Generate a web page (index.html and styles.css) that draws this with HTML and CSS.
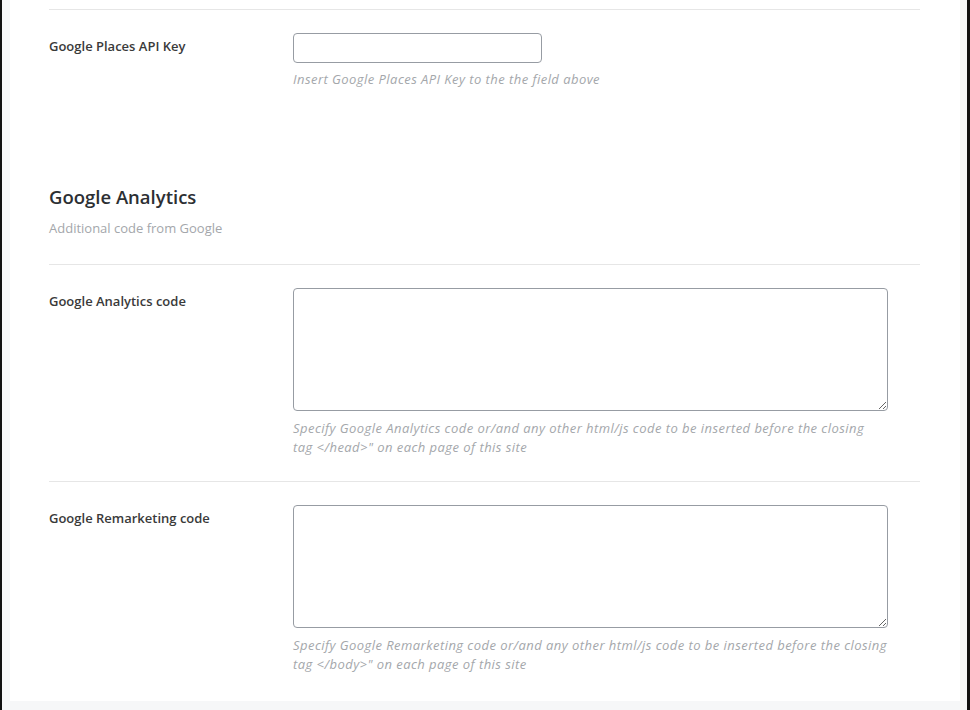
FILE: index.html
```html
<!DOCTYPE html>
<html>
<head>
<meta charset="utf-8">
<link rel="stylesheet" href="styles.css">
</head>
<body>
<div class="frame">
  <div class="panel">
    <hr class="rule first">
    <div class="row">
      <div class="label">Google Places API Key</div>
      <div class="field">
        <input class="text-input" type="text">
        <p class="help">Insert Google Places API Key to the the field above</p>
      </div>
    </div>

    <div class="section">
      <h2 class="section-title">Google Analytics</h2>
      <p class="section-sub">Additional code from Google</p>
    </div>

    <hr class="rule">
    <div class="row">
      <div class="label">Google Analytics code</div>
      <div class="field">
        <textarea class="code-area"></textarea>
        <p class="help">Specify Google Analytics code or/and any other html/js code to be inserted before the closing<br>tag &lt;/head&gt;" on each page of this site</p>
      </div>
    </div>

    <hr class="rule">
    <div class="row">
      <div class="label">Google Remarketing code</div>
      <div class="field">
        <textarea class="code-area"></textarea>
        <p class="help">Specify Google Remarketing code or/and any other html/js code to be inserted before the closing<br>tag &lt;/body&gt;" on each page of this site</p>
      </div>
    </div>
  </div>
</div>
</body>
</html>
```

FILE: styles.css
```css
html, body {
  margin: 0;
  padding: 0;
  background: #f6f7f7;
}

body {
  font-family: "Open Sans", "Liberation Sans", sans-serif;
}

.frame {
  box-sizing: border-box;
  width: 970px;
  height: 710px;
  display: flex;
  border-left: 2px solid #111;
  border-right: 3px solid #111;
  background: #f6f7f8;
  padding: 0 7px 9px 8px;
}

.panel {
  flex: 1;
  background: #fff;
  padding: 0 40px 0 39px;
  overflow: hidden;
}

.rule {
  border: 0;
  border-top: 1px solid #e6e6e6;
  margin: 0;
}

.rule.first {
  margin-top: 9px;
}

.row {
  display: flex;
  padding: 23px 0 24px;
}

.label {
  width: 244px;
  flex: none;
  font-size: 13px;
  font-weight: 600;
  color: #3a3a3a;
  line-height: 18px;
  padding-top: 4px;
}

.field {
  flex: 1;
}

.text-input {
  display: block;
  box-sizing: border-box;
  width: 249px;
  height: 30px;
  margin: 0;
  border: 1px solid #979ca3;
  border-radius: 4px;
  background: #fff;
}

.code-area {
  display: block;
  box-sizing: border-box;
  width: 595px;
  height: 123px;
  margin: 0;
  border: 1px solid #979ca3;
  border-radius: 4px;
  background: #fff;
  resize: vertical;
}

.help {
  margin: 7px 0 0;
  font-size: 13px;
  letter-spacing: 0.45px;
  font-style: italic;
  line-height: 19px;
  color: #a4a7ab;
  white-space: nowrap;
}

.row .code-area + .help {
  margin-top: 8px;
}

.section {
  padding: 72px 0 27px;
}

.section-title {
  margin: 0;
  font-size: 18.5px;
  font-weight: 600;
  color: #2c2f33;
  line-height: 24px;
}

.section-sub {
  margin: 10px 0 0;
  font-size: 13px;
  color: #a4a7ab;
  line-height: 18px;
}
```
